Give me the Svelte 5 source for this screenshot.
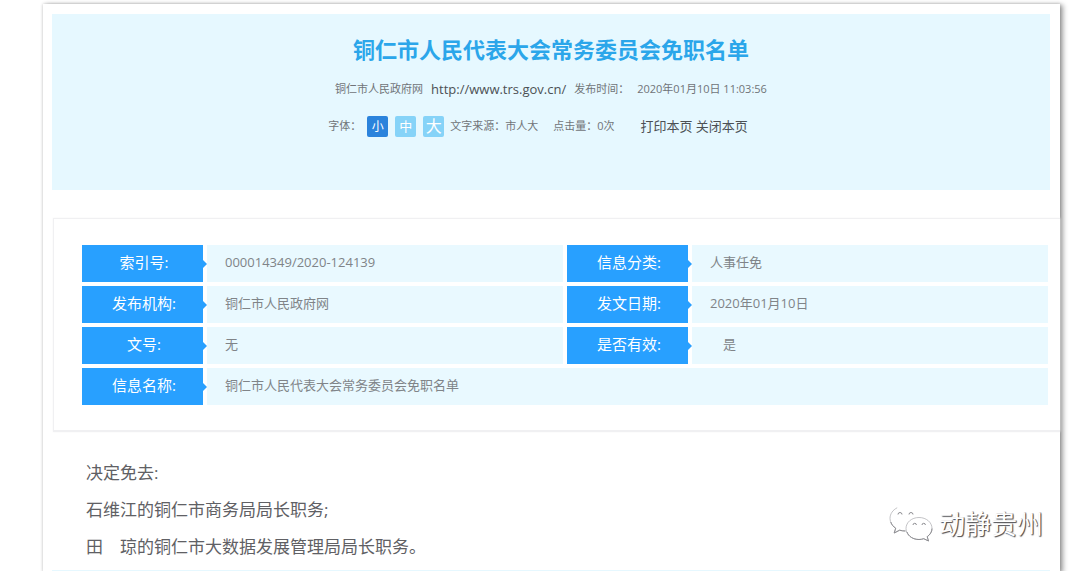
<script>
  let size = $state('small');

  const sizes = [
    { id: 'small', label: '小' },
    { id: 'medium', label: '中' },
    { id: 'large', label: '大' }
  ];

  const rows = [
    [['索引号:', '000014349/2020-124139'], ['信息分类:', '人事任免']],
    [['发布机构:', '铜仁市人民政府网'], ['发文日期:', '2020年01月10日']],
    [['文号:', '无'], ['是否有效:', '\u3000是']],
    [['信息名称:', '铜仁市人民代表大会常务委员会免职名单']]
  ];

  const paragraphs = [
    '决定免去:',
    '石维江的铜仁市商务局局长职务;',
    '田\u3000琼的铜仁市大数据发展管理局局长职务。'
  ];
</script>

<main class="page">
  <header class="banner">
    <h1>铜仁市人民代表大会常务委员会免职名单</h1>
    <div class="meta">
      <span>铜仁市人民政府网</span>
      <a class="site" href="http://www.trs.gov.cn/">http://www.trs.gov.cn/</a>
      <span>发布时间：</span>
      <time datetime="2020-01-10T11:03:56">2020年01月10日 11:03:56</time>
    </div>
    <div class="tools">
      <span class="caption">字体：</span>
      <div class="sizes">
        {#each sizes as s}
          <button type="button" class={s.id} class:active={size === s.id} onclick={() => (size = s.id)}>{s.label}</button>
        {/each}
      </div>
      <span class="source">文字来源：市人大</span>
      <span class="hits">点击量：0次</span>
      <nav><a href="#print">打印本页</a> <a href="#close">关闭本页</a></nav>
    </div>
  </header>

  <section class="info">
    <table>
      <colgroup><col class="name" /><col /><col class="name" /><col /></colgroup>
      <tbody>
        {#each rows as row}
          <tr>
            {#each row as [label, value]}
              <th scope="row">{label}</th>
              <td colspan={row.length === 1 ? 3 : 1}>{value}</td>
            {/each}
          </tr>
        {/each}
      </tbody>
    </table>
  </section>

  <article>
    {#each paragraphs as p}
      <p>{p}</p>
    {/each}
  </article>

  <div class="strip"></div>

  <div class="account">
    <svg viewBox="0 0 44 38" aria-hidden="true">
      <g fill="#fff" stroke="#b4b4b7" stroke-width=".8" stroke-linejoin="round">
        <path d="M16 1C7.500 1 1 6.500 1 13.500c0 4 2.200 7.500 5.700 9.700L5.200 28l5.400-2.800c1.700.5 3.500.8 5.400.8 8.500 0 15-5.500 15-12.500S24.500 1 16 1z" stroke-dasharray="62 40" stroke-dashoffset="-8" />
        <path d="M30 12.500c-7.300 0-13 4.800-13 11s5.700 11 13 11c1.700 0 3.300-.3 4.700-.8L39.500 36l-1.300-4.300c2.900-2 4.800-4.900 4.800-8.200 0-6.200-5.700-11-13-11z" />
      </g>
      <g fill="none" stroke="#8e8e92" stroke-width="1">
        <path d="M1.800 17c.8 2.600 2.500 4.700 4.900 6.200L5.200 28l5.400-2.800c1.800.5 3.600.8 5.600.8M18 27c1.600 4.500 6.300 7.500 12 7.500 1.700 0 3.300-.3 4.700-.8L39.500 36l-1.300-4.300c2.900-2 4.800-4.900 4.800-8.200" />
        <path d="M9 9.500a2 2 0 0 1 4 0M20 9.500a2 2 0 0 1 4 0M24 20a1.700 1.700 0 0 1 3.400 0M33 20a1.700 1.700 0 0 1 3.400 0" />
      </g>
    </svg>
    <span>动静贵州</span>
  </div>
</main>

<style>
  :global(body) {
    background: #fff;
  }

  .page {
    position: relative;
    box-sizing: border-box;
    margin: 4px 20px 0 43px;
    padding-top: 10px;
    background: #fff;
    box-shadow: 3px 1px 5px rgba(0, 0, 0, 0.38), 0 0 3px rgba(0, 0, 0, 0.2);
    font-family: 'Open Sans', 'Noto Sans CJK SC', sans-serif;
    color: #707478;
  }

  .banner {
    box-sizing: border-box;
    height: 176px;
    margin: 0 10px 0 9px;
    padding-top: 19px;
    background: #e6f8ff;
  }

  h1 {
    margin: 0;
    font-size: 22px;
    line-height: 32px;
    font-weight: 700;
    text-align: center;
    color: #2ba6ea;
  }

  .meta,
  .tools {
    display: flex;
    align-items: center;
    justify-content: center;
    height: 24px;
    font-size: 11px;
    line-height: 24px;
    white-space: nowrap;
  }

  .meta {
    margin-top: 12px;
    gap: 8px;
  }

  .site {
    font-size: 13px;
  }

  a {
    color: #4c5054;
    text-decoration: none;
  }

  .tools {
    margin-top: 13px;
    padding-right: 26px;
  }

  .caption {
    margin-right: 6px;
  }

  .sizes {
    display: flex;
    gap: 7px;
    margin-right: 6px;
  }

  button {
    width: 21px;
    height: 21px;
    padding: 0;
    border: 0;
    border-radius: 2px;
    background: #86d3f8;
    color: #fff;
    font-family: inherit;
    font-size: 13px;
    line-height: 21px;
  }

  .small {
    font-size: 12px;
  }

  .large {
    font-size: 16px;
  }

  .active {
    background: #2b83dc;
  }

  .source {
    margin-right: 15px;
  }

  .hits {
    margin-right: 26px;
  }

  nav {
    font-size: 13px;
  }

  .info {
    margin: 28px 0 0 10px;
    padding: 22px 8px 21px 24px;
    border: 1px solid #f0f0f2;
    border-right: 0;
    border-bottom-width: 2px;
    box-shadow: 0 0 2px #f4f4f6;
  }

  table {
    width: 100%;
    table-layout: fixed;
    border-spacing: 4px;
  }

  .name {
    width: 121px;
  }

  th,
  td {
    height: 37px;
    padding: 0;
    line-height: 35px;
    vertical-align: top;
  }

  th {
    position: relative;
    padding-left: 3px;
    background: #28a0ff;
    color: #fff;
    font-size: 15px;
    font-weight: 400;
    text-align: center;
  }

  th::after {
    content: '';
    position: absolute;
    left: 100%;
    top: 50%;
    margin-top: -4px;
    border: 4px solid transparent;
    border-right: 0;
    border-left-color: #28a0ff;
  }

  td {
    padding-left: 18px;
    background: #e9f9ff;
    color: #808488;
    font-size: 13px;
  }

  article {
    margin: 22px 43px 0;
    font-size: 17px;
    color: #606064;
  }

  p {
    margin: 0;
    line-height: 37px;
  }

  .strip {
    height: 2px;
    margin: 5px 10px 0 9px;
    background: #e6f8ff;
  }

  .account {
    position: absolute;
    right: 17px;
    bottom: 29px;
    display: flex;
    align-items: center;
    gap: 6px;
    font-size: 26px;
    line-height: 38px;
    color: #fff;
    text-shadow: 1px 1px 1px #4c4c50, 1px 0 0 #98989c;
  }

  .account svg {
    width: 44px;
    height: 38px;
  }
</style>
